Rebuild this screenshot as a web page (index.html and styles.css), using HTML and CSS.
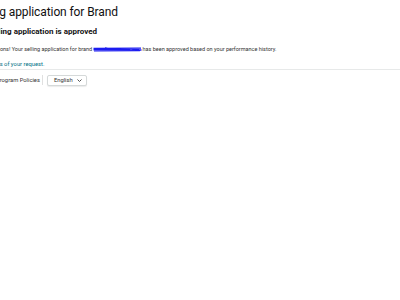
FILE: index.html
```html
<!DOCTYPE html>
<html>
<head>
<meta charset="utf-8">
<link rel="stylesheet" href="styles.css">
</head>
<body>
<div class="page">
  <h1 class="title">Selling application for Brand</h1>
  <h2 class="alert-title">Selling application is approved</h2>
  <p class="alert-text">Congratulations! Your selling application for brand <svg class="redact" width="49" height="5" viewBox="0 0 49 5"><path d="M0.5 1.5 L48 1.2 M0.5 2.8 L48.5 3 M1 3.8 L47 3.6 M12 1 L20 2.5 L28 1.5 L38 3 L46 1.8" stroke="#1c1cf0" stroke-width="1.3" fill="none"/></svg>has been approved based on your performance history.</p>
  <p class="link-line"><a href="#" class="link">View details of your request.</a></p>
</div>
<div class="footer">
  <div class="footer-inner">
    <span class="policies">Program Policies</span>
    <span class="sep"></span>
    <div class="lang"><span>English</span><svg class="caret" width="5" height="3" viewBox="0 0 5 3"><path d="M0.5 0.5 L2.5 2.5 L4.5 0.5" stroke="#555" stroke-width="1" fill="none"/></svg></div>
  </div>
</div>
</body>
</html>
```
FILE: styles.css
```css
html, body { margin: 0; padding: 0; background: #fff; overflow: hidden; }
body { font-family: Roboto, "Liberation Sans", sans-serif; color: #0f1111; width: 400px; height: 300px; }
.page { margin-left: -30px; padding-top: 4px; }
.title { font-size: 12px; font-weight: 400; margin: 0 0 0 1px; line-height: 16px; white-space: nowrap; color: #111; letter-spacing: -0.1px; }
.alert-title { font-size: 8px; font-weight: 700; margin: 7px 0 0 17px; line-height: 10px; white-space: nowrap; color: #111; }
.alert-text { font-size: 5.5px; color: #333; margin: 8px 0 0; line-height: 8px; white-space: nowrap; }
.redact { display: inline-block; vertical-align: -0.5px; }
.link-line { margin: 7px 0 0 1.5px; font-size: 5.8px; line-height: 8px; white-space: nowrap; }
.link { color: #007185; text-decoration: none; }
.footer { border-top: 1px solid #e7e9e9; margin-top: 0.5px; }
.footer-inner { display: flex; align-items: center; margin-left: -4px; padding-top: 5px; }
.policies { font-size: 5.8px; color: #333; white-space: nowrap; }
.sep { width: 1px; height: 10px; background: #e0e0e0; margin: 0 4px 0 2px; }
.lang { display: flex; align-items: center; justify-content: space-between; box-sizing: border-box; width: 40px; height: 11px; padding: 0 4px 0 6px; border: 1px solid #d5d9d9; border-radius: 2px; font-size: 5.8px; color: #333; box-shadow: 0 1px 1px rgba(15,17,17,.08); background: #fff; }
.caret { display: block; }
```
